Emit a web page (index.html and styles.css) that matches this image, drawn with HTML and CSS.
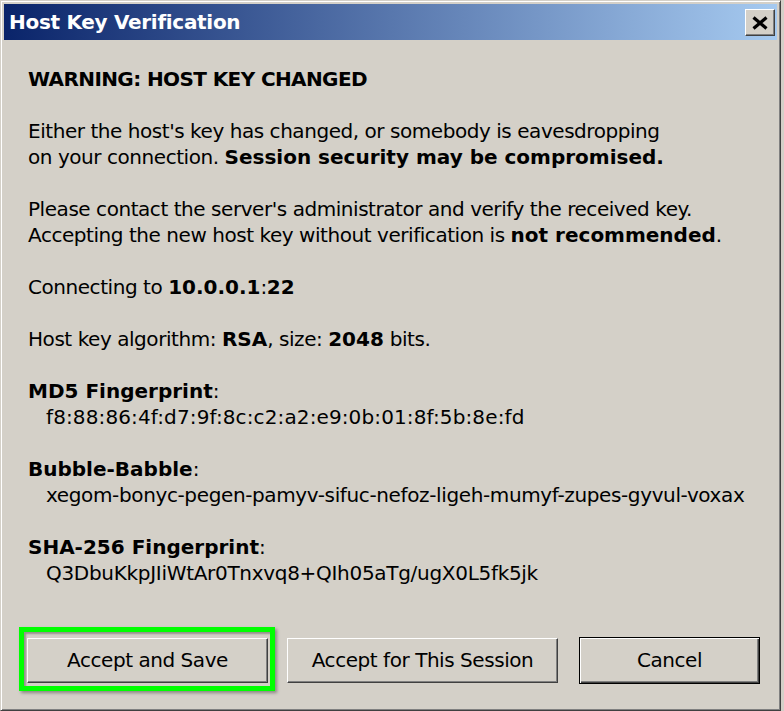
FILE: index.html
```html
<!DOCTYPE html>
<html>
<head>
<meta charset="utf-8">
<link rel="stylesheet" href="styles.css">
</head>
<body>
<div class="window">
  <div class="titlebar">
    <span class="title">Host Key Verification</span>
    <div class="close">
      <svg width="16" height="14" viewBox="0 0 16 14"><path d="M1.5 1.5 L14.5 12.5 M14.5 1.5 L1.5 12.5" stroke="#000" stroke-width="3.2" fill="none"/></svg>
    </div>
  </div>
  <div class="content">
    <p class="heading"><b>WARNING: HOST KEY CHANGED</b></p>
    <p>Either the host's key has changed, or somebody is eavesdropping<br>on your connection. <b>Session security may be compromised.</b></p>
    <p>Please contact the server's administrator and verify the received key.<br>Accepting the new host key without verification is <b>not recommended</b>.</p>
    <p>Connecting to <b>10.0.0.1</b>:<b>22</b></p>
    <p>Host key algorithm: <b>RSA</b>, size: <b>2048</b> bits.</p>
    <div class="fp"><b>MD5 Fingerprint</b>:<div class="val val-md5">f8:88:86:4f:d7:9f:8c:c2:a2:e9:0b:01:8f:5b:8e:fd</div></div>
    <div class="fp"><b>Bubble-Babble</b>:<div class="val val-bb">xegom-bonyc-pegen-pamyv-sifuc-nefoz-ligeh-mumyf-zupes-gyvul-voxax</div></div>
    <div class="fp last"><b>SHA-256 Fingerprint</b>:<div class="val val-sha">Q3DbuKkpJIiWtAr0Tnxvq8+QIh05aTg/ugX0L5fk5jk</div></div>
  </div>
  <div class="buttons">
    <div class="btn btn-save">Accept and Save</div>
    <div class="btn btn-session">Accept for This Session</div>
    <div class="btn btn-cancel">Cancel</div>
  </div>
  <div class="highlight"></div>
</div>
</body>
</html>
```
FILE: styles.css
```css
html, body {
  margin: 0;
  padding: 0;
  background: #d4d0c8;
}
body {
  font-family: "DejaVu Sans", sans-serif;
  font-size: 20px;
  letter-spacing: -0.45px;
  line-height: 26px;
  color: #000;
}
b { letter-spacing: 0; }
.heading b { letter-spacing: -0.6px; }
.window {
  position: relative;
  width: 781px;
  height: 711px;
  box-sizing: border-box;
  border: 1px solid;
  border-color: #d4d0c8 #404040 #404040 #d4d0c8;
  box-shadow: inset 1px 1px #fff, inset -1px -1px #808080;
  padding: 3px 3px;
  background: #d4d0c8;
}
.titlebar {
  height: 36px;
  background: linear-gradient(to right, #0a246a, #a6caf0);
  display: flex;
  align-items: center;
  justify-content: space-between;
  padding: 0 2px 0 5px;
}
.title {
  color: #fff;
  font-weight: bold;
  font-size: 20px;
  letter-spacing: -0.3px;
}
.close {
  width: 30px;
  height: 27px;
  box-sizing: border-box;
  background: #d4d0c8;
  border: 1px solid;
  border-color: #fff #404040 #404040 #fff;
  box-shadow: inset -1px -1px #808080;
  display: flex;
  align-items: center;
  justify-content: center;
  margin-top: 1px;
}
.close svg { display: block; }
.content {
  padding: 26px 0 0 24px;
}
.content p {
  margin: 0 0 26px 0;
  white-space: nowrap;
}
.fp {
  margin: 0 0 26px 0;
  white-space: nowrap;
}
.fp.last { margin-bottom: 0; }
.val {
  padding-left: 18px;
}
.val-md5 { letter-spacing: 0.12px; }
.val-bb { letter-spacing: -0.37px; }
.val-sha { letter-spacing: -0.3px; }
.buttons {
  display: flex;
  align-items: center;
  margin-top: 51px;
  padding-left: 23px;
}
.btn {
  height: 45px;
  box-sizing: border-box;
  border: 1px solid;
  border-color: #fff #404040 #404040 #fff;
  box-shadow: inset -1px -1px #808080;
  display: flex;
  align-items: center;
  justify-content: center;
  padding-bottom: 2px;
}
.btn-save { width: 241px; }
.btn-session { width: 271px; margin-left: 19px; }
.btn-cancel {
  width: 181px;
  height: 47px;
  margin-left: 21px;
  border: 1px solid #000;
  box-shadow: inset 1px 1px #fff, inset -1px -1px #404040, inset -2px -2px #808080;
}
.highlight {
  position: absolute;
  left: 18px;
  top: 626px;
  width: 256px;
  height: 64px;
  box-sizing: border-box;
  border: 5px solid #00ff00;
  box-shadow: 2px 2px 3px rgba(0,0,0,0.35), inset 2px 2px 2px rgba(0,0,0,0.3);
}
```
